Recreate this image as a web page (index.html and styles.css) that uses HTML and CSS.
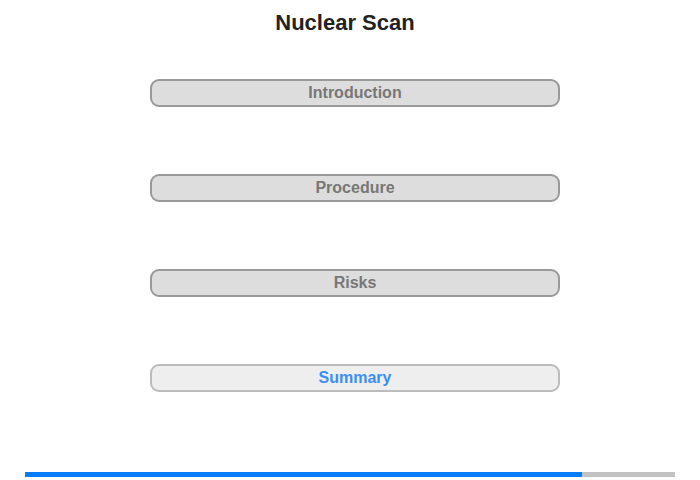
FILE: index.html
```html
<!DOCTYPE html>
<html>
<head>
<meta charset="utf-8">
<link rel="stylesheet" href="styles.css">
</head>
<body>
<div class="page">
  <h1 class="title">Nuclear Scan</h1>
  <div class="menu">
    <div class="btn">Introduction</div>
    <div class="btn">Procedure</div>
    <div class="btn">Risks</div>
    <div class="btn btn-active">Summary</div>
  </div>
  <div class="progress"><div class="progress-fill" style="width:557px"></div></div>
</div>
</body>
</html>
```
FILE: styles.css
```css
html, body {
  margin: 0;
  padding: 0;
  background: #fff;
}
.page {
  width: 700px;
  height: 480px;
  font-family: "Liberation Sans", Arial, sans-serif;
  display: flex;
  flex-direction: column;
}
.title {
  margin: 0;
  padding: 10px 10px 0 0;
  height: 26px;
  line-height: 26px;
  font-size: 22px;
  font-weight: bold;
  color: #222;
  text-align: center;
}
.menu {
  display: flex;
  flex-direction: column;
  gap: 67px;
  padding: 43px 0 0 150px;
}
.btn {
  box-sizing: border-box;
  width: 410px;
  height: 28px;
  border: 2px solid #999;
  border-radius: 9px;
  background: #ddd;
  color: #777;
  font-size: 16px;
  font-weight: bold;
  text-align: center;
  line-height: 24px;
}
.btn-active {
  border-color: #bbb;
  background: #eee;
  color: #3b8ef5;
}
.progress {
  margin: 80px 0 0 25px;
  width: 650px;
  height: 5px;
  background: #c2c2c2;
}
.progress-fill {
  height: 5px;
  background: #087dfc;
}
```
